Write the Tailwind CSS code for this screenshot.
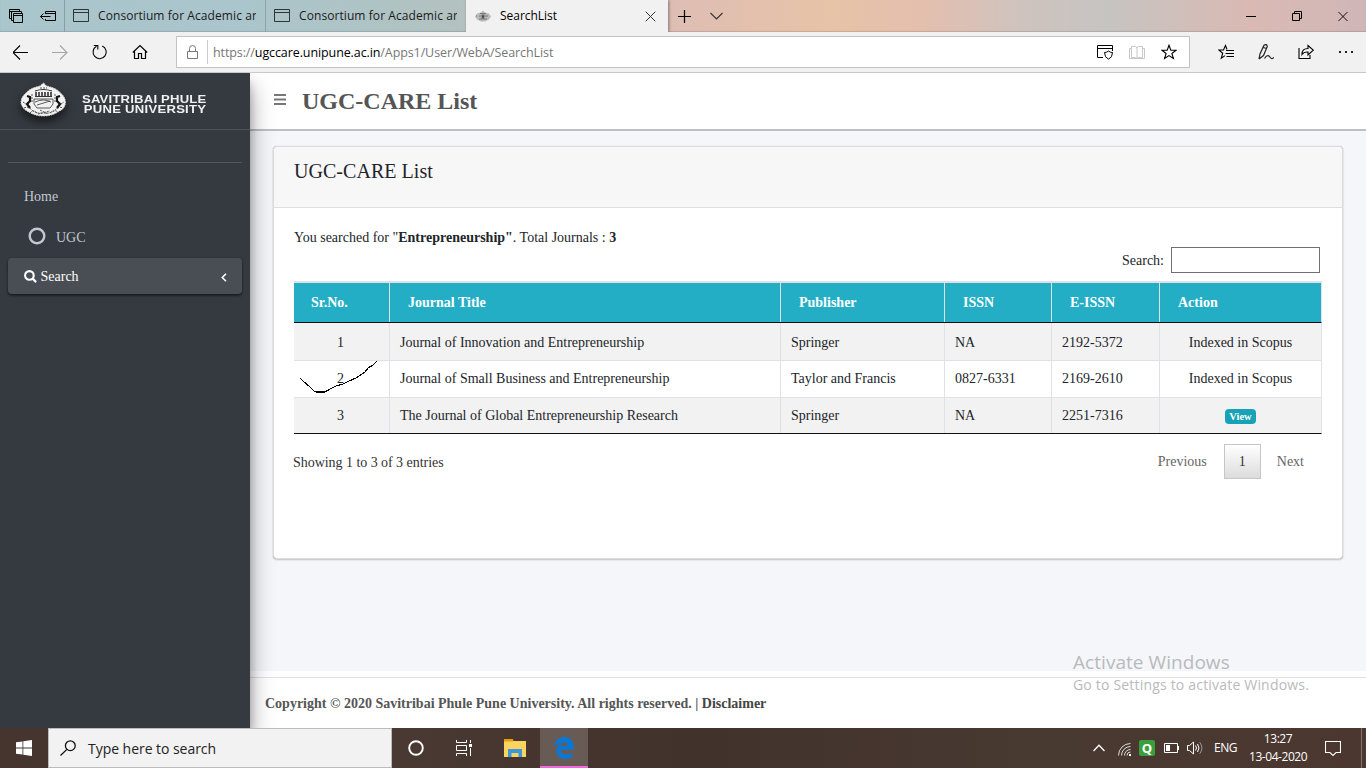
<!DOCTYPE html>
<html lang="en">
<head>
<meta charset="utf-8">
<title>SearchList</title>
<script src="https://cdn.jsdelivr.net/npm/@tailwindcss/browser@4"></script>
</head>
<body class="w-[1366px] h-[768px] overflow-hidden flex flex-col bg-white text-[#212529] font-['Liberation_Serif',serif] text-[14px] whitespace-nowrap">

<!-- Browser tabs -->
<div class="h-8 shrink-0 flex items-stretch bg-[linear-gradient(90deg,#a9c6cc_0px,#aac5cb_250px,#b2c2c0_450px,#dfbeb4_680px,#e2c0ae_740px,#e7c3a7_830px,#e4bfae_920px,#cfc3be_1020px,#c6c4c1_1110px,#dab9b3_1250px,#cfb7b7_1366px)] font-['Open_Sans',sans-serif] text-[12px] text-[#1b1b1b] shadow-[inset_0_-1px_1px_#0002]">
  <div class="w-[65px] flex items-center border-r border-[#879ea3] pl-2 gap-[15px]">
    <svg class="w-4 h-4" viewBox="0 0 16 16" fill="none" stroke="#000"><path d="M3.500 10.500h-2v-9h10v2M1.500 3.500h10M5.500 12.500h-2v-9h10v2M5.500 5.500h9v9h-9zM5.500 7.500h9"/></svg>
    <svg class="w-[18px] h-4" viewBox="0 0 18 16" fill="none" stroke="#000"><path d="M6.500 6V3.500h10v9h-10V11M6.500 5.500h10M1.500 8.500h10M4.500 5.500l-3 3 3 3"/></svg>
  </div>
  <div class="w-[201px] flex items-center border-r border-[#8fa2a5] pl-2">
    <svg class="w-4 h-4 shrink-0" viewBox="0 0 16 16" fill="none" stroke="#333"><path d="M.5 1.500h15v12H.5zM.5 4.500h15"/></svg>
    <span class="ml-[9px] w-[158px] overflow-hidden tracking-[0.08px]">Consortium for Academic an</span>
  </div>
  <div class="w-[200px] flex items-center pl-2">
    <svg class="w-4 h-4 shrink-0" viewBox="0 0 16 16" fill="none" stroke="#333"><path d="M.5 1.500h15v12H.5zM.5 4.500h15"/></svg>
    <span class="ml-[9px] w-[158px] overflow-hidden tracking-[0.08px]">Consortium for Academic an</span>
  </div>
  <div class="w-[202px] bg-[#f1f1f1] flex items-center pl-[9px] text-black shadow-[1px_0_3px_#0006]">
    <svg class="w-4 h-4" viewBox="0 0 16 16"><path d="M8 2.500l2 2 4 1 2 3-2 3-4 2H6l-4-2-2-3 2-3 4-1z" fill="#bbb"/><path d="M5 5.500h6M4 8h2M7 7h2v3H7zM10 8h3M4 11h8M1 8h1" stroke="#777" stroke-width="1.200"/></svg>
    <span class="ml-[9px] tracking-[-0.030px]">SearchList</span>
    <svg class="ml-auto mr-3 w-[11px] h-[11px]" viewBox="0 0 11 11" stroke="#333"><path d="M.7.7l9.600 9.600M10.300.7L.7 10.300"/></svg>
  </div>
  <div class="flex items-center pl-[10px] gap-[19px]">
    <svg class="w-[13px] h-[13px]" viewBox="0 0 13 13" stroke="#000" stroke-width="1.200"><path d="M6.500 0v13M0 6.500h13"/></svg>
    <svg class="w-[13px] h-[8px]" viewBox="0 0 13 8" fill="none" stroke="#333" stroke-width="1.100"><path d="M.5 1l6 6 6-6"/></svg>
  </div>
  <div class="ml-auto flex items-center mr-[18px] gap-[36px]">
    <svg class="w-[10px] h-[11px]" viewBox="0 0 10 11" stroke="#000"><path d="M0 5.500h10"/></svg>
    <svg class="w-[10px] h-[10px]" viewBox="0 0 10 10" fill="none" stroke="#000"><path d="M.5 2.500h7v7h-7zM2.500 2.500v-2h7v7h-2"/></svg>
    <svg class="w-[10px] h-[11px]" viewBox="0 0 11 11" stroke="#000"><path d="M.5.5l10 10M10.500.5l-10 10"/></svg>
  </div>
</div>

<!-- Address bar -->
<div class="h-[41px] shrink-0 bg-[#f1f1f1] border-b border-[#c9c9c9] flex items-center font-['Open_Sans',sans-serif]">
  <div class="w-[176px] shrink-0 flex items-center pl-[13px] gap-6">
    <svg class="w-4 h-4" viewBox="0 0 16 16" fill="none" stroke="#000" stroke-width="1.100"><path d="M0 8.500h15M7 1.500l-7 7 7 7"/></svg>
    <svg class="w-4 h-4 -ml-px" viewBox="0 0 16 16" fill="none" stroke="#a5a5a5" stroke-width="1.100"><path d="M0 8.500h15M8 1.500l7 7-7 7"/></svg>
    <svg class="w-4 h-4" viewBox="0 0 16 16" fill="none" stroke="#000" stroke-width="1.100"><path d="M10.200 2A6.600 6.600 0 1 1 4.500 2.300M1.800 1.500h4v4"/></svg>
    <svg class="w-4 h-4" viewBox="0 0 16 16" fill="none" stroke="#000" stroke-width="1.200"><path d="M.8 8.500L8 1.500l7.200 7M2.500 7.500v7h4v-5h3v5h4v-7"/></svg>
  </div>
  <div class="w-[1014px] h-8 bg-white border border-[#c3c3c3] flex items-center pl-[10px]">
    <svg class="w-[11px] h-[14px]" viewBox="0 0 11 14" fill="none" stroke="#777"><path d="M.5 6.500h10v7H.5zM2.500 6.500V3.500a3 3 0 0 1 6 0v3"/></svg>
    <div class="w-px h-6 bg-[#ccc] ml-[9px]"></div>
    <span class="ml-[5px] pt-[2px] text-[12.500px] tracking-[-0.100px] text-[#777]">https://<span class="text-black">ugccare.unipune.ac.in</span>/Apps1/User/WebA/SearchList</span>
    <div class="ml-auto mr-3 flex items-center gap-4">
      <svg class="w-4 h-4" viewBox="0 0 16 16" fill="none" stroke="#000"><path d="M6 13.500H.5v-12h15V7M.5 4.500h15M7.500 8.500q2.500 0 4-1.500 1.500 1.500 4 1.500 0 5-4 6.700-4-1.700-4-6.700z"/></svg>
      <svg class="w-4 h-4" viewBox="0 0 16 16" fill="none" stroke="#c8c8c8"><path d="M2.500 2.500h4l1.500 1 1.500-1h4v11h-4L8 14.500l-1.500-1h-4zM8 3v11M2.500 4.500h-2v10h15v-10h-2"/></svg>
      <svg class="w-4 h-4" viewBox="0 0 16 16" fill="none" stroke="#000" stroke-width="1.100"><path d="M8 1.200l1.800 4.900 5.300.2-4.200 3.200 1.500 5L8 11.600l-4.400 2.900 1.500-5L.9 6.300l5.300-.2z"/></svg>
    </div>
  </div>
  <div class="ml-auto mr-[12px] flex items-center gap-6">
    <svg class="w-4 h-4" viewBox="0 0 16 16" fill="none" stroke="#000" stroke-width="1.100"><path d="M9 5.500L7.500 1.500 5.500 6H.8l3.900 3.200-1.400 5L7 11.600M8 6.500h8M7.500 9.500H16M8.500 12.500H16"/></svg>
    <svg class="w-4 h-4" viewBox="0 0 16 16" fill="none" stroke="#222" stroke-width="1.200"><path d="M1 15l1-5L6 1.200Q8.800-.5 9.300 2.500L5.500 11.500 1 15M5.500 3.500l3 1M6.500 14.500q3-4.500 5-2 2 3.500 4.500 1"/></svg>
    <svg class="w-4 h-4" viewBox="0 0 16 16" fill="none" stroke="#000" stroke-width="1.100"><path d="M1 4v10.500h11V11M4 10.500Q4 4.500 10 4.500v-3l5.300 4.700L10 11V8Q6 7.500 4 10.500z"/></svg>
    <svg class="w-[16px] h-4" viewBox="0 0 16 16" fill="#222"><path d="M1 7h2v2H1zM7 7h2v2H7zM13 7h2v2h-2z"/></svg>
  </div>
</div>

<!-- Page -->
<div class="h-[655px] shrink-0 flex relative">
  <aside class="w-[250px] shrink-0 bg-[#343a40] text-[#c2c7d0] z-10 shadow-[0_14px_22px_#0006,0_10px_8px_#0003] [clip-path:inset(0_-30px_0_0)]">
    <div class="h-[57px] border-b border-[#4b545c] flex items-start">
      <svg class="ml-5 mt-[9px] w-[48px] h-[38px] drop-shadow-[0_5px_5px_#0009]" viewBox="0 0 48 38">
        <path d="M23.500 1l3 3q10 2 14 7 5 4 5 10-1 6-6 8-7 5-16 5T7 29q-5-3-6-8 0-6 5-10 4-5 14-7z" fill="#f2f2f2" stroke="#ddd" stroke-dasharray="1.500 1"/>
        <g fill="none" stroke="#333"><path d="M15 9q8-3 17 0M15 14.500h17" stroke-width="1.200"/><path d="M16 10v4M19 10v4M22 10v4M25 10v4M28 10v4M31 10v4" stroke-width="1.600"/><path d="M14 17h19v5l-3 4h-13l-3-4zM15 20q9-4 16 0M17 23l13-4" stroke-width=".8"/><path d="M7 14l3 1v4l-3 3 3 4M40 14l-3 1v4l3 3-3 4" stroke="#111" stroke-width="2.200"/><path d="M4 26q4-2 8 2t11 3q8 1 12-3t8-2M10 31q3-4 7 0M20 28l8 4M30 31q4-4 8-1M18 32l12-3M3 20l3 2M41 22l3-2M20 6h7M12 12v8M35 12v8" stroke="#555" stroke-dasharray="2 1"/></g>
      </svg>
      <div class="ml-[14px] mt-[21px] font-['Liberation_Sans',sans-serif] font-bold text-[11px] leading-[10px] text-[#f0f0f0]">
        <div class="origin-left scale-x-[1.190] tracking-[0.170px]">SAVITRIBAI PHULE</div>
        <div class="origin-left scale-x-[1.190] tracking-[0.220px] pl-[1.500px]">PUNE UNIVERSITY</div>
      </div>
    </div>
    <div class="mx-2 mt-8 border-t border-[#4f5962]"></div>
    <div class="mt-[23px] ml-6 h-[21px] leading-[21px]">Home</div>
    <div class="mt-[20px] ml-[27.500px] h-[21px] flex items-center">
      <svg class="w-[18px] h-[18px] -mt-[4px]" viewBox="0 0 18 18"><circle cx="9" cy="9" r="7.300" fill="none" stroke="#c2c7d0" stroke-width="2.400"/></svg>
      <span class="ml-[10.500px]">UGC</span>
    </div>
    <div class="mx-2 mt-[10px] h-9 rounded bg-[#494e54] text-white flex items-center pl-4 pr-[15px] shadow-[0_1px_3px_#0006,0_2px_2px_#0004]">
      <svg class="w-[13px] h-[13px]" viewBox="0 0 13 13" fill="none" stroke="#fff"><circle cx="5.400" cy="5.400" r="4.300" stroke-width="2.100"/><path d="M8.500 8.500l3.600 3.600" stroke-width="2.300"/></svg>
      <span class="ml-[3.500px]">Search</span>
      <svg class="ml-auto w-[6px] h-[9px] mt-[2px]" viewBox="0 0 6 9" fill="none" stroke="#fff" stroke-width="1.600"><path d="M5 .8L1.300 4.500 5 8.200"/></svg>
    </div>
  </aside>

  <main class="grow flex flex-col">
    <header class="h-[58px] shrink-0 border-b-2 border-[#bcbfc3] flex items-center pl-6">
      <svg class="w-[12px] h-[12px] -mt-[4px]" viewBox="0 0 12 12" stroke="#777" stroke-width="1.800"><path d="M0 2h12M0 6.500h12M0 11h12"/></svg>
      <h1 class="ml-[16px] text-[24px] font-bold text-[#555] leading-none">UGC-CARE List</h1>
    </header>
    <div class="h-[540px] shrink-0 bg-[#f4f6f9] pt-[15px] pl-[23px]">
      <section class="w-[1070px] h-[413px] rounded bg-white border border-[#dcdddf] shadow-[0_0_1px_#0003,0_1px_2px_#0003] flex flex-col">
        <div class="h-[61px] shrink-0 bg-[#f7f7f7] rounded-t border-b border-[#dfdfdf] pl-5 pt-[9px] text-[20px] leading-[30px] tracking-[0.040px]">UGC-CARE List</div>
        <div class="px-5">
          <p class="mt-[19px] leading-[21px]">You searched for "<b>Entrepreneurship"</b>. Total Journals : <b>3</b></p>
          <div class="-mt-px h-[26px] flex justify-end items-center pr-[2px]">
            <span class="mr-[7px]">Search:</span>
            <input class="w-[149px] h-[26px] border border-[#707070] bg-white">
          </div>
          <div class="mt-[8px] w-[1028px] relative border-t-2 border-[#dee2e6]">
            <div class="h-[40px] grid grid-cols-[96px_391px_164px_107px_108px_161px] bg-[#24aec5] text-white font-bold leading-[39px] border-b border-b-[#111] border-r border-r-[#dee2e6] divide-x divide-[#dee2e6]">
              <div class="pl-[17px]">Sr.No.</div><div class="pl-[18px]">Journal Title</div><div class="pl-[18px]">Publisher</div><div class="pl-[18px]">ISSN</div><div class="pl-[18px]">E-ISSN</div><div class="pl-[18px]">Action</div>
            </div>
            <div class="h-[38px] grid grid-cols-[96px_391px_164px_107px_108px_161px] bg-[#f2f2f2] leading-[39px] border-b border-r border-[#dee2e6] divide-x divide-[#dee2e6]">
              <div class="text-center pr-[2px]">1</div><div class="pl-[10px]">Journal of Innovation and Entrepreneurship</div><div class="pl-[10px]">Springer</div><div class="pl-[10px]">NA</div><div class="pl-[10px]">2192-5372</div><div class="text-center">Indexed in Scopus</div>
            </div>
            <div class="h-[37px] grid grid-cols-[96px_391px_164px_107px_108px_161px] bg-white leading-[35px] border-b border-r border-[#dee2e6] divide-x divide-[#dee2e6]">
              <div class="text-center pr-[2px]">2</div><div class="pl-[10px]">Journal of Small Business and Entrepreneurship</div><div class="pl-[10px]">Taylor and Francis</div><div class="pl-[10px]">0827-6331</div><div class="pl-[10px]">2169-2610</div><div class="text-center">Indexed in Scopus</div>
            </div>
            <div class="h-[36px] grid grid-cols-[96px_391px_164px_107px_108px_161px] bg-[#f2f2f2] leading-[35px] border-b border-b-[#111] border-r border-r-[#dee2e6] divide-x divide-[#dee2e6]">
              <div class="text-center pr-[2px]">3</div><div class="pl-[10px]">The Journal of Global Entrepreneurship Research</div><div class="pl-[10px]">Springer</div><div class="pl-[10px]">NA</div><div class="pl-[10px]">2251-7316</div>
              <div class="flex justify-center items-center pt-[2px]"><span class="w-[31px] h-[15px] rounded bg-[#17a2b8] text-white font-bold text-[10.500px] leading-[15px] text-center">View</span></div>
            </div>
            <!-- Hand-drawn tick over row 2 -->
            <svg class="absolute left-[5px] top-[77px] w-[80px] h-[35px]" viewBox="0 0 80 35" fill="none" stroke="#000" stroke-width="1.100" shape-rendering="crispEdges"><path d="M1 18l4 4 5 4 5 5 2 1h9l5-3 6-3 7-2 6-3 7-3 9-6 3-4 5-3 4-4"/></svg>
          </div>
          <div class="flex items-start mt-[10px] pr-[2px]">
            <span class="-ml-px leading-[21px] mt-[8px] text-[#333] tracking-[-0.040px]">Showing 1 to 3 of 3 entries</span>
            <div class="ml-auto flex leading-[35px] text-[#666]">
              <span class="mr-[17px]">Previous</span>
              <span class="w-[37px] h-[35px] leading-[33px] text-center text-[#333] border border-[#c6c6c6] bg-linear-to-b from-white to-[#dcdcdc]">1</span>
              <span class="ml-4 mr-[16px]">Next</span>
            </div>
          </div>
        </div>
      </section>
    </div>
    <footer class="mt-[6px] grow border-t border-[#dee2e6] pl-[15px] pt-[15px] font-bold text-[#555] leading-[21px]">Copyright © 2020 Savitribai Phule Pune University. All rights reserved. | <span class="text-[#444]">Disclaimer</span></footer>
  </main>

  <!-- Desktop watermark -->
  <div class="absolute left-[1073px] top-[577px] font-['Open_Sans',sans-serif] text-[#b9babc]">
    <div class="text-[19px] leading-6 tracking-[0.050px]">Activate Windows</div>
    <div class="text-[14px] leading-5 mt-px tracking-[0.190px]">Go to Settings to activate Windows.</div>
  </div>
</div>

<!-- Taskbar -->
<div class="h-10 shrink-0 flex items-center bg-[linear-gradient(90deg,#46352f,#4a3832_400px,#42322c_700px,#483931_1050px,#4b3730)] font-['Open_Sans',sans-serif] text-white z-20">
  <div class="w-12 flex justify-center">
    <svg class="w-4 h-4" viewBox="0 0 16 16" fill="#fff"><path d="M0 2.300l6.500-.9v6.200H0zM7.300 1.300L16 0v7.600H7.300zM0 8.400h6.500v6.200L0 13.700zM7.300 8.400H16V16l-8.700-1.300z"/></svg>
  </div>
  <div class="w-[344px] h-10 bg-[#f2f2f2] border border-[#bbb] text-[#222] flex items-center pl-[11px]">
    <svg class="w-4 h-4" viewBox="0 0 16 16" fill="none" stroke="#111" stroke-width="1.300"><circle cx="10.300" cy="5.700" r="4.900"/><path d="M6.900 9.400L.5 15.500"/></svg>
    <span class="ml-[12px] text-[14px] tracking-[-0.040px]">Type here to search</span>
  </div>
  <div class="w-12 flex justify-center"><svg class="w-4 h-4" viewBox="0 0 16 16"><circle cx="8" cy="8" r="6.800" fill="none" stroke="#fff" stroke-width="1.900"/></svg></div>
  <div class="w-12 flex justify-center"><svg class="w-4 h-4" viewBox="0 0 16 16" fill="none" stroke="#fff"><path d="M.5 0v2.500h10V0M.5 5.500h10v5H.5zM.5 16v-2.500h10V16M14.500 0v3M14.500 8v8"/><path d="M13 4h3v3h-3z" fill="#fff" stroke="none"/></svg></div>
  <div class="w-[52px] pl-4"><svg class="w-[22px] h-[20px]" viewBox="0 0 22 20"><path d="M0 2h8l2 1h12v16H0z" fill="#fdd35f"/><path d="M0 1h9v2.500H0z" fill="#e3a007"/><path d="M4 19v-8h14v8h-3.500v-4h-7v4z" fill="#3c98dc"/></svg></div>
  <div class="w-12 h-10 bg-[#685b56] border-b-2 border-[#f068dc] flex justify-center items-center pt-px">
    <svg class="w-5 h-[22px]" viewBox="0 0 20 22"><path d="M0 10C1 3.500 5 0 10.500 0 16.500 0 19.500 4.500 19.500 10v2.800H6.700C7 16 9.500 17.500 12.500 17.500c2.300 0 4.200-.6 5.700-1.500v4.300C16.500 21.300 14 22 11.500 22 6 22 2.500 18.500 2.500 13.500c0-3.500 1.800-6.200 4.800-7.800C4.500 6 1.800 7.500 0 10zM6.800 9h6.500c0-2.300-1-3.700-3-3.700S7.100 6.900 6.800 9z" fill="#0878d8"/></svg>
  </div>
  <div class="ml-auto h-10 flex items-center">
    <svg class="w-3 h-[8px]" viewBox="0 0 12 8" fill="none" stroke="#fff" stroke-width="1.300"><path d="M.5 7L6 1.200 11.500 7"/></svg>
    <svg class="ml-[13px] mt-[2px] w-[13px] h-[13px]" viewBox="0 0 13 13" fill="none" stroke="#ddd"><path d="M.5 12.500a12 12 0 0 1 12-12M3.500 12.500a9 9 0 0 1 9-9M6.500 12.500a6 6 0 0 1 6-6M9 12.500a3.500 3.500 0 0 1 3.500-3.500"/><path d="M11 11h2v2h-2z" fill="#fff" stroke="none"/></svg>
    <span class="ml-[8px] w-4 h-4 rounded-[2px] bg-[#3a9e3c] text-center font-bold text-[13px] leading-4">Q</span>
    <svg class="ml-[9px] w-[15px] h-[10px]" viewBox="0 0 15 10" fill="none" stroke="#fff"><path d="M.5.500h13v9H.5z"/><path d="M2 2h4v6H2zM14 3h1v4h-1z" fill="#fff" stroke="none"/></svg>
    <svg class="ml-[8px] w-[16px] h-[14px]" viewBox="0 0 16 14" fill="none" stroke="#fff"><path d="M.5 4.500h2l4-3.500v12l-4-3.500h-2zM8.500 4.500q2 2.500 0 5M10.500 3q3 4 0 8"/><path d="M12.700 1.200q4.500 5.800 0 11.600" stroke="#999"/></svg>
    <span class="ml-[11px] w-[23px] text-[12px] tracking-[-0.500px]">ENG</span>
    <div class="ml-[12px] w-[58px] text-[12px] leading-[18px] text-center tracking-[-0.450px]"><div>13:27</div><div>13-04-2020</div></div>
    <svg class="ml-[18px] w-4 h-4" viewBox="0 0 16 16" fill="none" stroke="#fff" stroke-width="1.100"><path d="M.5 1.500h15v11H11L8 15.500l-3-3H.5z"/></svg>
    <div class="ml-5 w-px h-10 bg-[#85766f] mr-1"></div>
  </div>
</div>
</body>
</html>
